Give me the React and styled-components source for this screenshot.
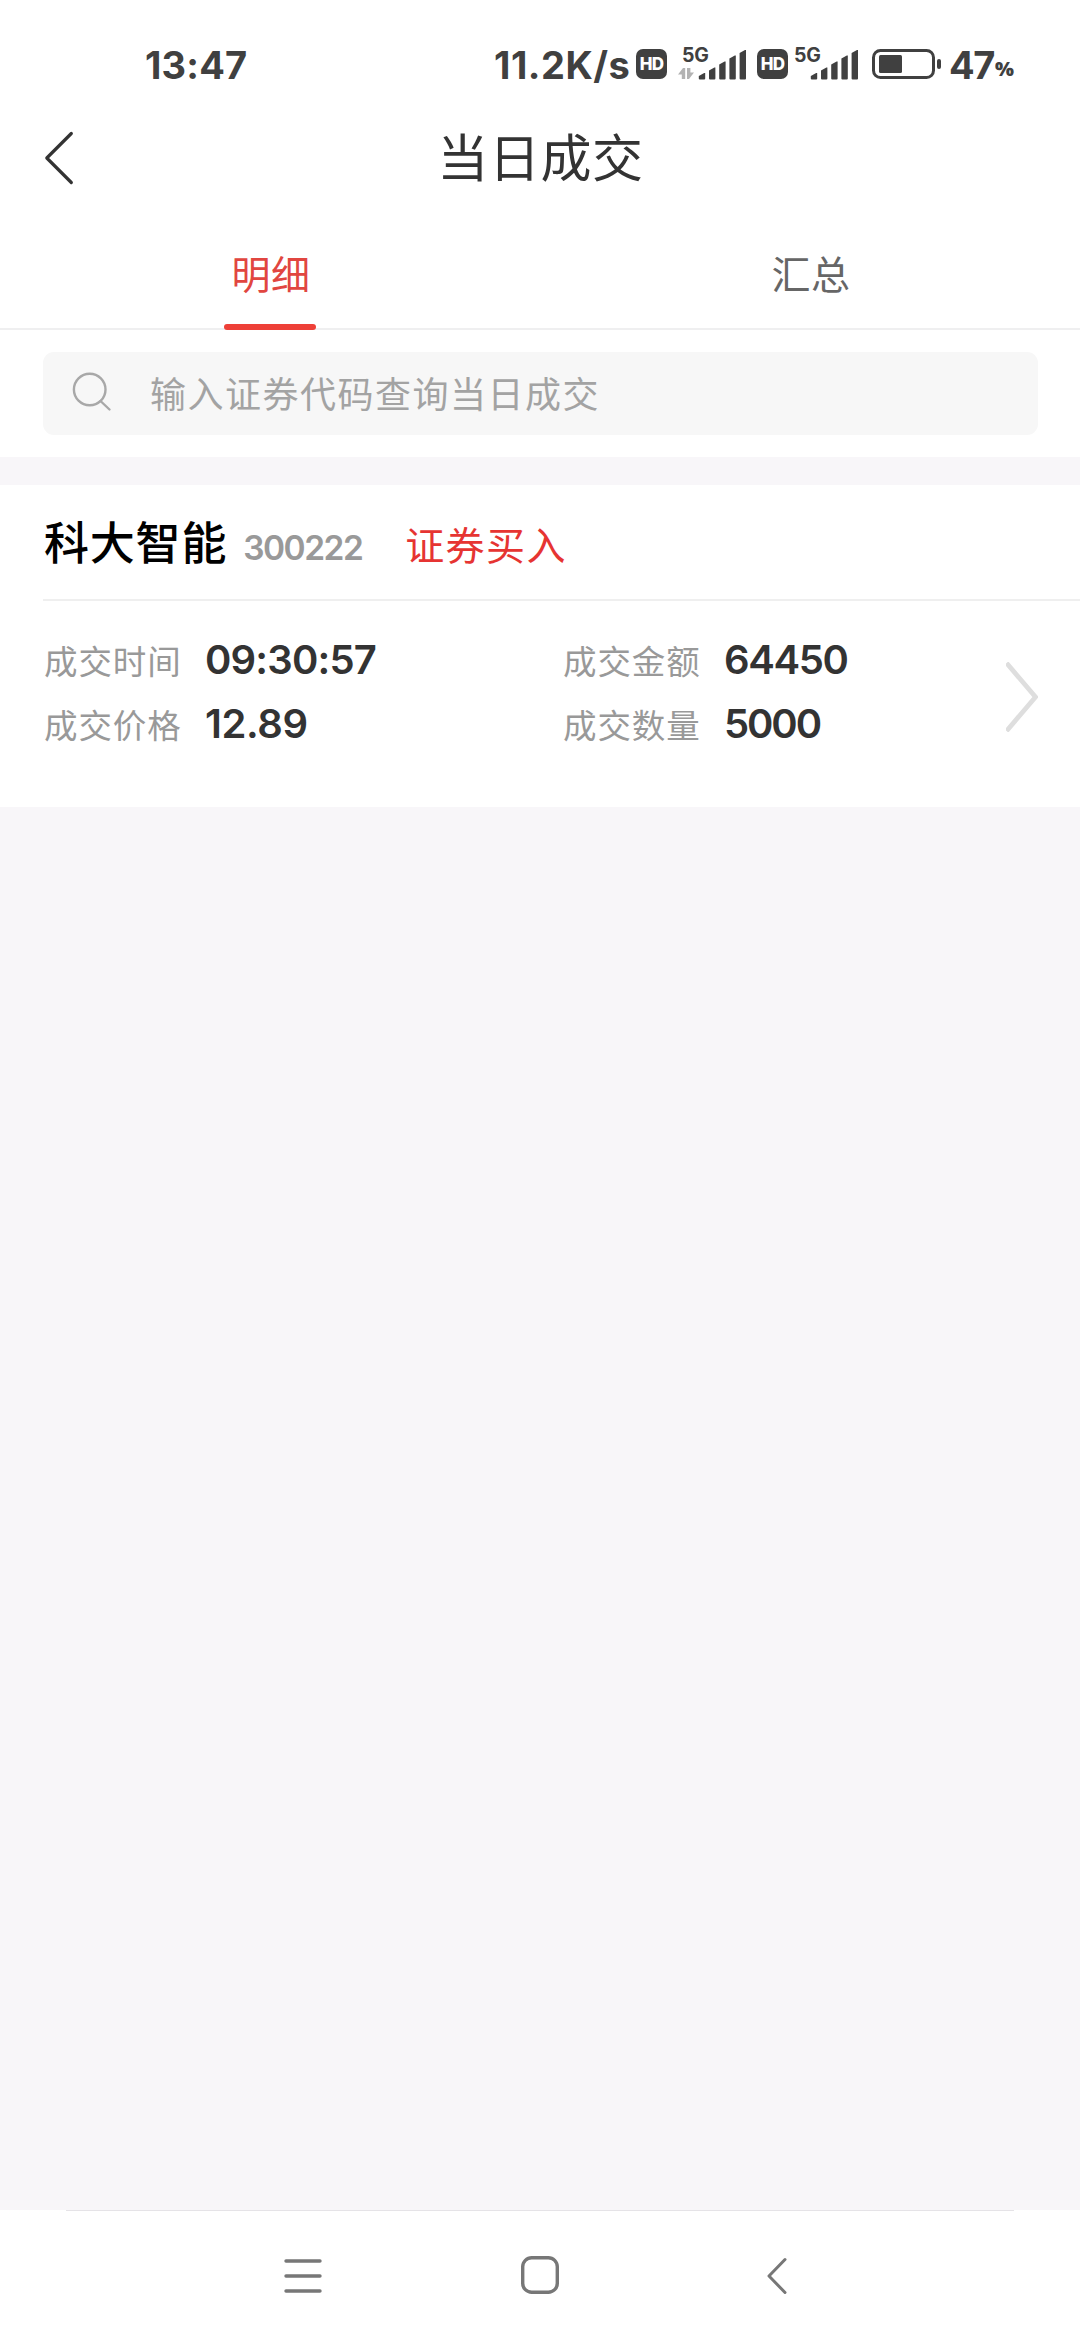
import React from "react";
import styled, { createGlobalStyle } from "styled-components";

const cjk = `"Noto Sans CJK SC", sans-serif`;
const latin = `Inter, "Noto Sans CJK SC", sans-serif`;

const GlobalStyle = createGlobalStyle`
  * { box-sizing: border-box; }
  body { margin: 0; background: #f8f6f9; font-family: ${cjk}; }
  svg { display: block; flex: none; }
`;

const Screen = styled.div`
  display: flex;
  flex-direction: column;
  width: 1080px;
  height: 2340px;
  background: #f8f6f9;
  overflow: hidden;
`;

const StatusBar = styled.div`
  display: flex;
  align-items: flex-start;
  height: 112px;
  padding: 40px 0 0 145px;
  background: #fff;
  color: #404040;
`;

const StatusText = styled.span`
  width: ${(p) => p.$width}px;
  font: 700 38px/50px ${latin};
  letter-spacing: ${(p) => p.$spacing || 0}px;
  white-space: nowrap;
`;

const BatteryLevel = styled.span`
  display: flex;
  align-items: flex-start;
  margin-left: 7px;
  font: 700 38px/50px ${latin};
  letter-spacing: -1.4px;
`;

const PercentSign = styled.span`
  margin-left: 1px;
  font: 800 20px/58px "Open Sans", ${latin};
`;

const StatusIcons = styled.div`
  display: flex;
  align-items: flex-start;
  margin-left: 248px;
`;

const HdBadge = styled.span`
  display: flex;
  align-items: center;
  justify-content: center;
  width: 31px;
  height: 30px;
  margin: 9px 0 0 ${(p) => p.$left}px;
  border-radius: 7px;
  background: #404040;
  color: #fff;
  font: 800 17px/30px ${latin};
  letter-spacing: -0.8px;
`;

const Signal = styled.div`
  display: flex;
  flex-direction: column;
  width: ${(p) => p.$width}px;
  height: 40px;
  margin-left: ${(p) => p.$left}px;
`;

const SignalLabel = styled.span`
  height: 14px;
  margin: 8px 0 0 ${(p) => p.$indent}px;
  font: 700 19.5px/14px ${latin};
  letter-spacing: -0.3px;
`;

const SignalBars = styled.div`
  align-self: flex-end;
  margin-top: -13px;
`;

const Battery = styled.div`
  margin: 9px 0 0 14px;
`;

const Header = styled.header`
  display: grid;
  grid-template-columns: 100px 1fr 100px;
  align-items: center;
  height: 92px;
  background: #fff;
`;

const BackButton = styled.div`
  padding-left: 44px;
`;

const Title = styled.h1`
  margin: 0;
  padding: 0 0 6px 1px;
  color: #333;
  font: 400 51px/84px ${cjk};
  letter-spacing: 0.6px;
  text-align: center;
`;

const Tabs = styled.nav`
  display: grid;
  grid-template-columns: 1fr 1fr;
  height: 126px;
  border-bottom: 2px solid #efeff0;
  background: #fff;
`;

const Tab = styled.div`
  display: flex;
  flex-direction: column;
  align-items: center;
  justify-content: space-between;
  height: 126px;
  padding-top: 38px;
  color: ${(p) => (p.$active ? "#e14640" : "#666")};
  font: 400 39px/60px ${cjk};

  &::after {
    content: "";
    width: 92px;
    height: 6px;
    border-radius: 3px;
    background: ${(p) => (p.$active ? "#ee4038" : "transparent")};
  }
`;

const TabLabel = styled.span`
  margin-left: 2px;
  letter-spacing: 0.5px;
`;

const SearchArea = styled.div`
  padding: 22px 42px 22px 43px;
  background: #fff;
`;

const SearchBox = styled.div`
  display: flex;
  align-items: center;
  gap: 38px;
  height: 83px;
  padding: 0 0 4px 29px;
  border-radius: 11px;
  background: #f7f7f7;
`;

const Placeholder = styled.span`
  color: #a3a3a3;
  font: 400 36px/56px ${cjk};
  letter-spacing: 1.5px;
`;

const Card = styled.section`
  height: 322px;
  margin-top: 28px;
  padding-left: 43px;
  background: #fff;
`;

const CardHead = styled.div`
  display: flex;
  align-items: baseline;
  height: 116px;
  padding: 23px 0 0 1px;
  border-bottom: 2px solid #efefef;
`;

const StockName = styled.span`
  color: #000;
  font: 500 45px/66px ${cjk};
  letter-spacing: 0.8px;
`;

const StockCode = styled.span`
  width: 134px;
  margin-left: 16px;
  color: #999;
  font: 600 33.5px/50px ${latin};
  letter-spacing: -1.5px;
`;

const Side = styled.span`
  margin-left: 28px;
  color: #e63432;
  font: 400 39px/60px ${cjk};
  letter-spacing: 1.4px;
`;

const CardBody = styled.div`
  display: flex;
  align-items: center;
  justify-content: space-between;
  padding: 29px 42px 0 1px;
`;

const Fields = styled.div`
  display: grid;
  grid-template-columns: 519px auto;
  grid-auto-rows: 64px;
`;

const Field = styled.div`
  display: flex;
  align-items: baseline;
`;

const Label = styled.span`
  width: 161px;
  color: #999;
  font: 400 33.5px/60px ${cjk};
  letter-spacing: 0.9px;
`;

const Value = styled.span`
  color: #333;
  font: 600 40px/60px ${latin};
  letter-spacing: ${(p) => p.$spacing || 0}px;
`;

const Chevron = styled.div`
  padding-top: 5px;
`;

const NavBar = styled.footer`
  display: flex;
  flex-direction: column;
  align-items: center;
  height: 130px;
  margin-top: auto;
  background: #fff;
`;

const NavLine = styled.div`
  width: 948px;
  height: 1px;
  background: #e5e3e7;
`;

const NavIcons = styled.div`
  display: grid;
  grid-template-columns: repeat(3, 237px);
  justify-items: center;
  align-items: center;
  height: 129px;
`;

function Bars() {
  const tops = [24, 18.5, 12.5, 6.5, 1];
  return (
    <svg width="48" height="31" viewBox="0 0 48 31" fill="#404040">
      {tops.map((t, i) => {
        const x = 0.8 + i * 10.2;
        const w = 6.4;
        return (
          <path key={t} d={`M${x} ${t + 3}L${x + w - 1} ${t}H${x + w}V29.5Q${x + w} 30.5 ${x + w - 1} 30.5H${x + 1}Q${x} 30.5 ${x} 29.5Z`} />
        );
      })}
    </svg>
  );
}

function BarsWithArrows() {
  return (
    <svg width="68" height="31" viewBox="0 0 68 31">
      <path d="M7.2 19V30H3.8V25.5H0L5 19ZM9 30V19H12.4V23.5H16L11 30Z" fill="#b3b3b3" />
      <g transform="translate(20 0)">
        <Bars />
      </g>
    </svg>
  );
}

const fields = [
  ["成交时间", "09:30:57", -0.8],
  ["成交金额", "64450", -1.4],
  ["成交价格", "12.89", -0.4],
  ["成交数量", "5000", -2.1],
];

export default function App() {
  return (
    <Screen>
      <GlobalStyle />
      <StatusBar>
        <StatusText $width={101} $spacing={0.2}>13:47</StatusText>
        <StatusIcons>
          <StatusText $width={136} $spacing={0.5}>11.2K/s</StatusText>
          <HdBadge $left={6}>HD</HdBadge>
          <Signal $width={68} $left={11}>
            <SignalLabel $indent={4}>5G</SignalLabel>
            <SignalBars><BarsWithArrows /></SignalBars>
          </Signal>
          <HdBadge $left={11}>HD</HdBadge>
          <Signal $width={64} $left={6}>
            <SignalLabel $indent={0}>5G</SignalLabel>
            <SignalBars><Bars /></SignalBars>
          </Signal>
          <Battery>
            <svg width="70" height="30" viewBox="0 0 70 30" fill="none">
              <rect x="1.5" y="1.5" width="60" height="27" rx="7" stroke="#404040" strokeWidth="3" />
              <rect x="7" y="6" width="23" height="18" rx="1.5" fill="#404040" />
              <rect x="65" y="10" width="4" height="10" rx="2" fill="#404040" />
            </svg>
          </Battery>
          <BatteryLevel>47<PercentSign>%</PercentSign></BatteryLevel>
        </StatusIcons>
      </StatusBar>

      <Header>
        <BackButton>
          <svg width="30" height="54" viewBox="0 0 30 54" fill="none">
            <path d="M27.3 2.5L2.8 27L27.3 51.5" stroke="#333" strokeWidth="3.2" strokeLinecap="round" strokeLinejoin="round" />
          </svg>
        </BackButton>
        <Title>当日成交</Title>
      </Header>

      <Tabs>
        <Tab $active><TabLabel>明细</TabLabel></Tab>
        <Tab><TabLabel>汇总</TabLabel></Tab>
      </Tabs>

      <SearchArea>
        <SearchBox>
          <svg width="40" height="40" viewBox="0 0 40 40" fill="none" stroke="#a8a8a8" strokeWidth="2.4" strokeLinecap="round">
            <circle cx="17.7" cy="17.5" r="15.8" />
            <path d="M28.5 29L37.5 37.5" />
          </svg>
          <Placeholder>输入证券代码查询当日成交</Placeholder>
        </SearchBox>
      </SearchArea>

      <Card>
        <CardHead>
          <StockName>科大智能</StockName>
          <StockCode>300222</StockCode>
          <Side>证券买入</Side>
        </CardHead>
        <CardBody>
          <Fields>
            {fields.map(([label, value, spacing]) => (
              <Field key={label}>
                <Label>{label}</Label>
                <Value $spacing={spacing}>{value}</Value>
              </Field>
            ))}
          </Fields>
          <Chevron>
            <svg width="32" height="70" viewBox="0 0 32 70" fill="none">
              <path d="M0.5 1L29.5 35L0.5 69" stroke="#dedede" strokeWidth="4.8" />
            </svg>
          </Chevron>
        </CardBody>
      </Card>

      <NavBar>
        <NavLine />
        <NavIcons>
          <svg width="38" height="38" viewBox="0 0 38 38" fill="none" stroke="#777" strokeWidth="3.4" strokeLinecap="round">
            <path d="M2 4H36M2 19H36M2 34H36" />
          </svg>
          <svg width="38" height="40" viewBox="0 0 38 40" fill="none" stroke="#777" strokeWidth="3.4">
            <rect x="1.7" y="1.7" width="34.6" height="34.6" rx="9" />
          </svg>
          <svg width="20" height="38" viewBox="0 0 20 38" fill="none" stroke="#777" strokeWidth="3" strokeLinecap="round" strokeLinejoin="round">
            <path d="M18 2.5L2 19L18 35.5" />
          </svg>
        </NavIcons>
      </NavBar>
    </Screen>
  );
}
